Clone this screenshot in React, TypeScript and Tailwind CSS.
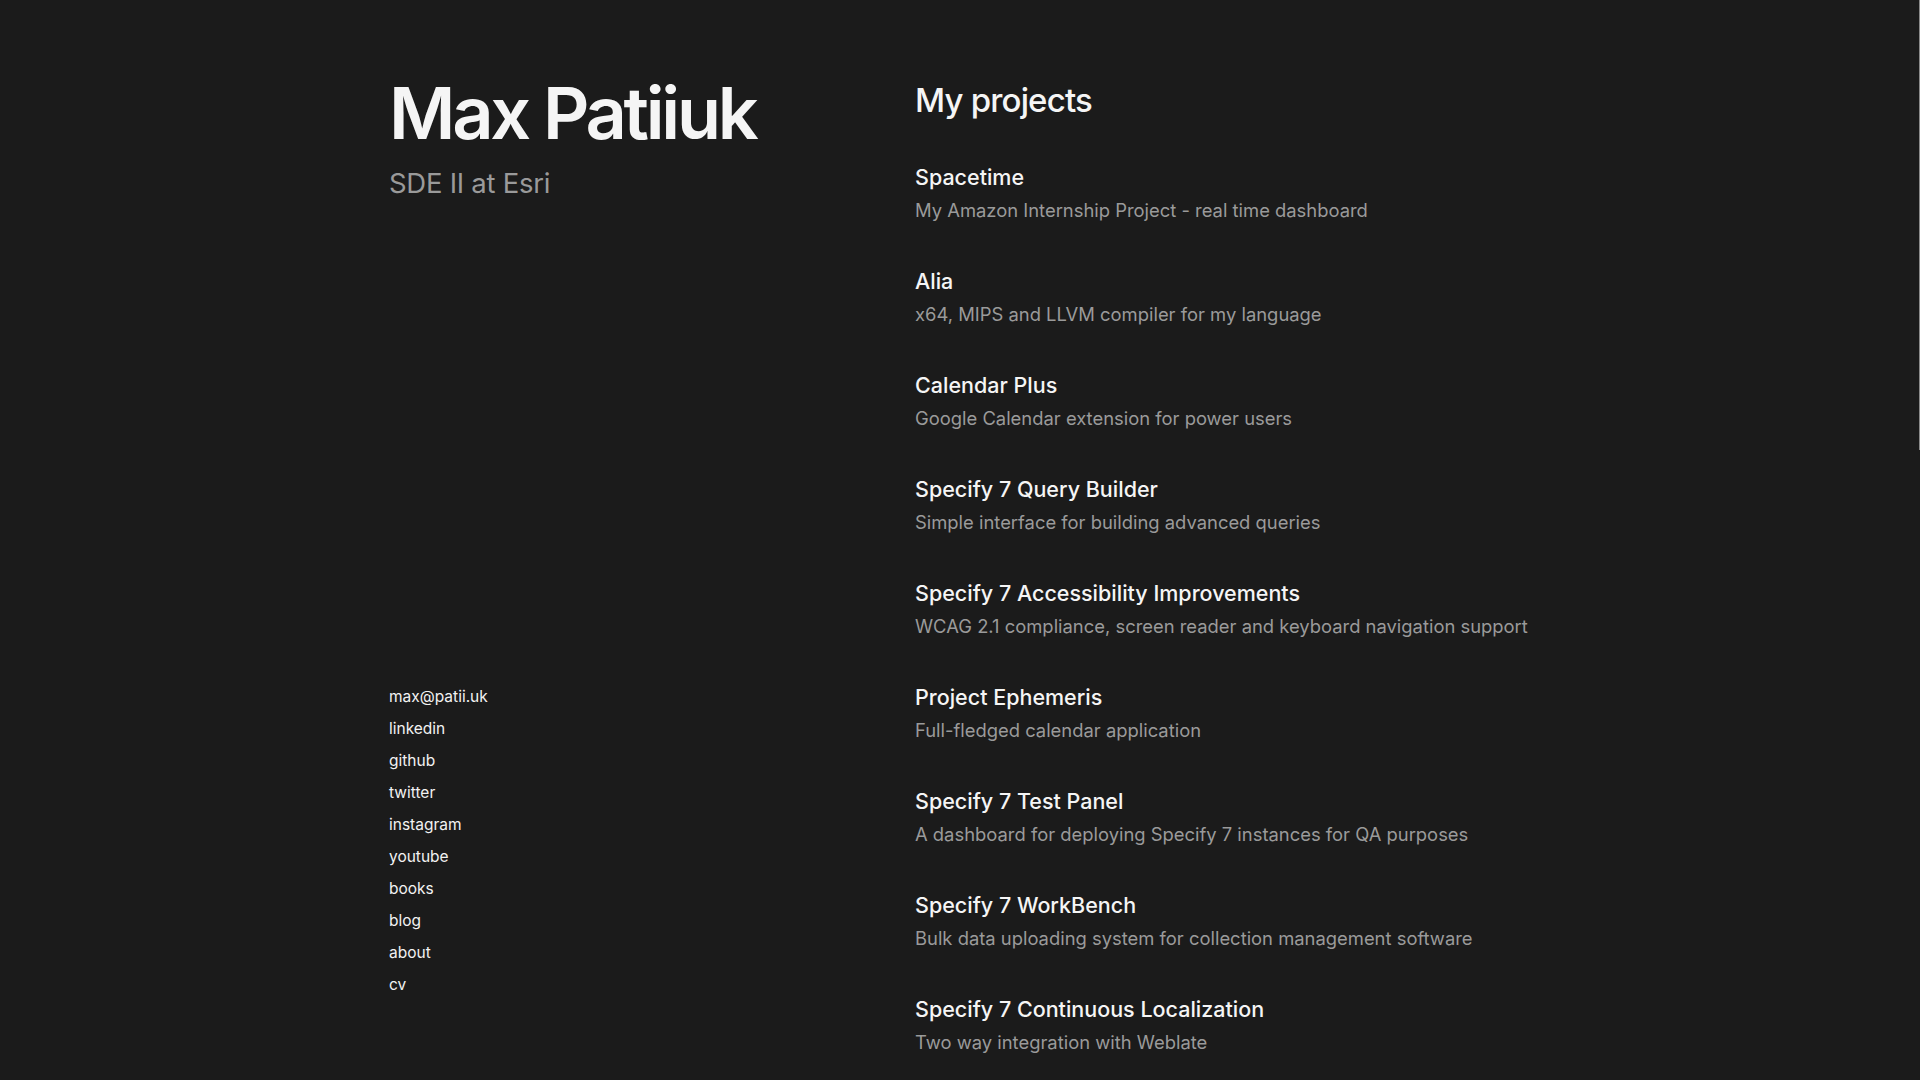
const projects = [
  { title: 'Spacetime', description: 'My Amazon Internship Project - real time dashboard' },
  { title: 'Alia', description: 'x64, MIPS and LLVM compiler for my language' },
  { title: 'Calendar Plus', description: 'Google Calendar extension for power users' },
  { title: 'Specify 7 Query Builder', description: 'Simple interface for building advanced queries' },
  {
    title: 'Specify 7 Accessibility Improvements',
    description: 'WCAG 2.1 compliance, screen reader and keyboard navigation support',
  },
  { title: 'Project Ephemeris', description: 'Full-fledged calendar application' },
  { title: 'Specify 7 Test Panel', description: 'A dashboard for deploying Specify 7 instances for QA purposes' },
  { title: 'Specify 7 WorkBench', description: 'Bulk data uploading system for collection management software' },
  { title: 'Specify 7 Continuous Localization', description: 'Two way integration with Weblate' },
];

const links = ['max@patii.uk', 'linkedin', 'github', 'twitter', 'instagram', 'youtube', 'books', 'blog', 'about', 'cv'];

function App() {
  return (
    <div className="relative h-screen overflow-hidden bg-[#1b1b1b] font-['Inter',sans-serif] text-[#f5f5f5] antialiased">
      {/* fake scrollbar thumb */}
      <div className="absolute right-0 top-0 h-[450px] w-px bg-[#8a8a8a]" />

      <div className="mx-auto flex w-[1142px]">
        <aside className="flex h-[1080px] w-[526px] shrink-0 flex-col justify-between pt-[77px] pb-[79px]">
          <header>
            <h1 className="text-[72px] font-semibold leading-[72px] tracking-[-0.045em]">Max Patiiuk</h1>
            <p className="mt-[18px] text-[27.5px] leading-8 tracking-[-0.01em] text-[#9a9a9a]">SDE II at Esri</p>
          </header>
          <ul className="text-[15.5px] leading-8 text-[#f2f2f2]">
            {links.map((link) => (
              <li key={link}>
                <a href="#">{link}</a>
              </li>
            ))}
          </ul>
        </aside>

        <main className="flex-1 pt-20">
          <h2 className="text-[33px] font-medium leading-10 tracking-[-0.025em]">My projects</h2>
          <div className="mt-[43px] flex flex-col gap-[43px]">
            {projects.map((p) => (
              <article key={p.title}>
                <h3 className="text-[21.5px] font-medium leading-7">{p.title}</h3>
                <p className="mt-[5px] text-[18.4px] leading-7 text-[#9a9a9a]">{p.description}</p>
              </article>
            ))}
          </div>
        </main>
      </div>
    </div>
  );
}

export default App;
